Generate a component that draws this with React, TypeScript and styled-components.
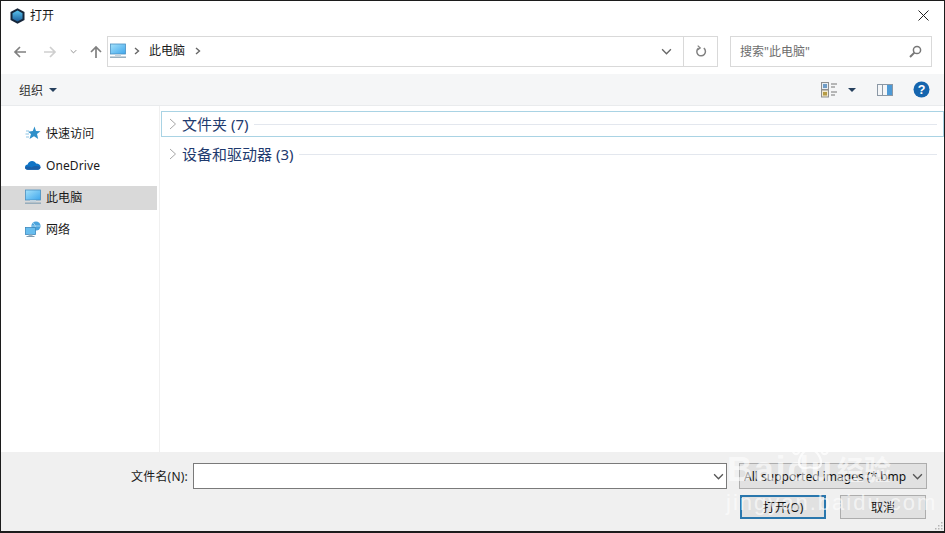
import React from "react";
import styled, { createGlobalStyle } from "styled-components";

const Global = createGlobalStyle`
  html, body { margin: 0; padding: 0; background: #fff; }
  * { box-sizing: border-box; }
`;

const Window = styled.div`
  position: relative;
  width: 945px;
  height: 533px;
  overflow: hidden;
  display: flex;
  flex-direction: column;
  background: #fff;
  border: 1px solid #1c1c1c;
  border-bottom-width: 2px;
  font-family: "Noto Sans", "Noto Sans CJK SC", sans-serif;
  font-size: 12px;
  color: #1a1a1a;
`;

const TitleBar = styled.div`
  height: 29px;
  flex: none;
  display: flex;
  align-items: center;
  padding: 0 15px 0 9px;
  gap: 5px;
`;
const TitleText = styled.span`
  flex: 1;
  font-size: 12px;
  line-height: 16px;
`;

const NavBar = styled.div`
  height: 31px;
  margin-top: 6px;
  flex: none;
  display: flex;
  align-items: center;
  padding-right: 12px;
`;
const NavButtons = styled.div`
  width: 106px;
  flex: none;
  display: flex;
  align-items: center;
  padding-left: 12px;
  gap: 0;
`;
const NavGap = styled.span<{ $w: number }>`
  width: ${(p) => p.$w}px;
  flex: none;
`;
const AddressBox = styled.div`
  width: 611px;
  height: 31px;
  flex: none;
  display: flex;
  align-items: center;
  border: 1px solid #d9d9d9;
`;
const Crumbs = styled.div`
  flex: 1;
  display: flex;
  align-items: center;
  padding: 0 0 1px 2px;
  color: #1a1a1a;
`;
const CrumbText = styled.span`
  margin: 0 10px 0 9px;
  font-size: 12px;
  line-height: 16px;
  padding-bottom: 1px;
`;
const AddressAction = styled.div<{ $w: number; $line?: boolean }>`
  width: ${(p) => p.$w}px;
  height: 100%;
  flex: none;
  display: flex;
  align-items: center;
  justify-content: center;
  border-left: ${(p) => (p.$line ? "1px solid #d9d9d9" : "none")};
`;
const SearchBox = styled.div`
  width: 202px;
  height: 31px;
  margin-left: 12px;
  flex: none;
  display: flex;
  align-items: center;
  justify-content: space-between;
  padding: 0 9px 1px;
  border: 1px solid #d9d9d9;
  color: #6d6d6d;
  font-size: 12px;
`;

const Toolbar = styled.div`
  height: 32px;
  margin-top: 7px;
  flex: none;
  display: flex;
  align-items: center;
  padding: 0 14px 0 18px;
  background: #f5f6f7;
  border-bottom: 1px solid #e9ebed;
`;
const ToolLabel = styled.span`
  font-size: 12px;
  color: #333;
  margin-right: 6px;
`;
const Spacer = styled.div`
  flex: 1;
`;
const ToolIcons = styled.div`
  display: flex;
  align-items: center;
`;

const Body = styled.div`
  flex: 1;
  min-height: 0;
  display: flex;
`;
const Sidebar = styled.nav`
  width: 159px;
  flex: none;
  padding-top: 16px;
  display: flex;
  flex-direction: column;
  gap: 8px;
  border-right: 1px solid #f0f0f0;
`;
const NavRow = styled.div<{ $active?: boolean }>`
  width: 156px;
  height: 24px;
  display: flex;
  align-items: center;
  padding: 0 0 2px 24px;
  gap: 5px;
  background: ${(p) => (p.$active ? "#d9d9d9" : "transparent")};
  font-size: 12px;
  color: #1a1a1a;
`;
const NavText = styled.span`
  letter-spacing: 0.1px;
`;
const IconSlot = styled.span`
  width: 16px;
  height: 16px;
  flex: none;
  display: inline-flex;
`;

const Content = styled.main`
  flex: 1;
  min-width: 0;
  padding: 5px 0 0 1px;
  display: flex;
  flex-direction: column;
  gap: 4px;
`;
const Group = styled.div<{ $focus?: boolean }>`
  height: 26px;
  display: flex;
  align-items: center;
  padding: 0 6px 0 7px;
  border: 1px solid ${(p) => (p.$focus ? "#a9d3e4" : "transparent")};
`;
const GroupTitle = styled.span`
  margin: 0 6px 0 5px;
  padding-bottom: 1px;
  font-size: 15px;
  line-height: 20px;
  color: #1e3a6e;
  white-space: nowrap;
`;
const GroupLine = styled.div`
  flex: 1;
  height: 1px;
  background: #e3e7ee;
`;

const Footer = styled.footer`
  height: 79px;
  flex: none;
  background: #f0f0f0;
  padding: 11px 17px 0 130px;
  display: flex;
  flex-direction: column;
`;
const FileRow = styled.div`
  display: flex;
  align-items: center;
  height: 26px;
`;
const FileLabel = styled.label`
  width: 62px;
  flex: none;
  font-size: 12px;
  letter-spacing: 0.2px;
  color: #1a1a1a;
`;
const FileInput = styled.div`
  width: 534px;
  height: 26px;
  flex: none;
  background: #fff;
  border: 1px solid #7a7a7a;
  display: flex;
  align-items: center;
  justify-content: flex-end;
  padding-right: 2px;
`;
const TypeSelect = styled.div`
  width: 188px;
  height: 26px;
  margin-left: 12px;
  flex: none;
  display: flex;
  align-items: center;
  justify-content: space-between;
  padding: 0 3px 0 4px;
  background: #e1e1e1;
  border: 1px solid #adadad;
  font-size: 12px;
  color: #111;
`;
const TypeText = styled.span`
  width: 164px;
  overflow: hidden;
  white-space: nowrap;
  font-size: 12px;
`;
const ButtonRow = styled.div`
  margin-top: 6px;
  padding-right: 1px;
  display: flex;
  justify-content: flex-end;
  gap: 14px;
`;
const DialogButton = styled.button<{ $primary?: boolean }>`
  width: 86px;
  height: 24px;
  margin: 0;
  padding: 0;
  background: #e1e1e1;
  border: ${(p) => (p.$primary ? "2px solid #2a77ad" : "1px solid #adadad")};
  font-family: inherit;
  font-size: 12px;
  color: #111;
`;

const Grip = styled.svg`
  position: absolute;
  right: 1px;
  bottom: 1px;
`;

const Watermark = styled.div`
  position: absolute;
  left: 725px;
  top: 430px;
  width: 200px;
  height: 100px;
  pointer-events: none;
  color: rgba(255, 255, 255, 0.62);
`;
const WmBaidu = styled.span`
  position: absolute;
  left: 1px;
  top: 18px;
  font-family: "Liberation Sans", sans-serif;
  font-weight: 700;
  font-size: 35px;
  line-height: 40px;
  letter-spacing: 2px;
`;
const WmJing = styled.span`
  position: absolute;
  left: 111px;
  top: 20px;
  font-family: "Noto Sans CJK SC", sans-serif;
  font-weight: 700;
  font-size: 27px;
  line-height: 36px;
`;
const WmUrl = styled.span`
  position: absolute;
  left: 0;
  top: 59px;
  font-family: "Liberation Sans", sans-serif;
  font-size: 22px;
  line-height: 26px;
  letter-spacing: 2px;
`;
const WmPaw = styled.svg`
  position: absolute;
  left: 58px;
  top: 2px;
`;

const Chevron = ({ color = "#555", w = 9 }: { color?: string; w?: number }) => (
  <svg width={w} height={w} viewBox="0 0 10 10">
    <path d="M1 3 L5 7 L9 3" fill="none" stroke={color} strokeWidth="1.2" />
  </svg>
);

const ArrowSvg = styled.svg<{ $flip?: boolean }>`
  transform: ${(p) => (p.$flip ? "scaleX(-1)" : "none")};
`;

const Arrow = ({ color, flip }: { color: string; flip?: boolean }) => (
  <ArrowSvg $flip={flip} width="14" height="14" viewBox="0 0 14 14">
    <path d="M13 7 H2 M7 2 L2 7 L7 12" fill="none" stroke={color} strokeWidth="1.7" />
  </ArrowSvg>
);

const Monitor = ({ id }: { id: string }) => (
  <svg width="16" height="16" viewBox="0 0 16 16">
    <defs>
      <linearGradient id={id} x1="0" y1="0" x2="1" y2="1">
        <stop offset="0" stopColor="#a5e2fb" />
        <stop offset="1" stopColor="#3ea6ec" />
      </linearGradient>
    </defs>
    <rect x="0.5" y="1" width="15" height="10" fill={`url(#${id})`} stroke="#4a8fc0" strokeWidth="0.8" />
    <rect x="5" y="11" width="6" height="2" fill="#c3d3de" />
    <rect x="0" y="13.5" width="16" height="1.4" fill="#8fa8b8" />
  </svg>
);

const Star = () => (
  <svg width="16" height="16" viewBox="0 0 16 16">
    <path d="M9.5 1.5 L11 6 L15.5 6.2 L12 9 L13.2 14 L9 11.2 L4.5 14 L6 9 L3 6.8 L7.8 6 Z" fill="#2e8fc9" />
    <path d="M1 6 H4 M0.5 9 H4 M1 12 H4" stroke="#8cc4e4" strokeWidth="1" />
  </svg>
);

const Cloud = () => (
  <svg width="17" height="16" viewBox="0 0 17 16">
    <path d="M3 13 C0.8 13 0 11.5 0 10.3 C0 8.6 1.4 7.6 2.8 7.6 C3.4 5.2 5.4 3.8 7.5 3.8 C9.6 3.8 11 5 11.7 6.5 C14.4 6.4 16.5 8 16.5 10.2 C16.5 12 15.2 13 13.6 13 Z" fill="#0f74c6" />
    <path d="M3 13 C1.2 13 0 12 0 10.4 C3 9 5 9.5 7 10.6 C9.5 9 13 8.6 16.5 10.2 C16.5 12 15.2 13 13.6 13 Z" fill="#1a5fa8" />
  </svg>
);

const Network = () => (
  <svg width="16" height="17" viewBox="0 0 16 17">
    <circle cx="11" cy="5" r="4.6" fill="#4aa3dc" />
    <path d="M8 2 C10 3 11 6 10 8.5 M7 5 H15" stroke="#b7e0f5" strokeWidth="0.8" fill="none" />
    <rect x="0.5" y="6.5" width="10" height="7" fill="#68bdee" stroke="#3c88bc" strokeWidth="0.8" />
    <rect x="3.5" y="13.5" width="4" height="1.5" fill="#9bb4c4" />
    <rect x="1.5" y="15" width="8" height="1" fill="#7f9bb0" />
  </svg>
);

const AppIcon = () => (
  <svg width="15" height="16" viewBox="0 0 15 16">
    <defs>
      <linearGradient id="cube" x1="0" y1="0" x2="0" y2="1">
        <stop offset="0" stopColor="#59c3ee" />
        <stop offset="1" stopColor="#1c5f9c" />
      </linearGradient>
    </defs>
    <path d="M7.5 0.3 L14.5 4 V12 L7.5 15.7 L0.5 12 V4 Z" fill="#16263a" />
    <path d="M7.5 2.6 L12.5 5.2 V10.8 L7.5 13.4 L2.5 10.8 V5.2 Z" fill="url(#cube)" />
  </svg>
);

const ViewIcon = () => (
  <svg width="17" height="16" viewBox="0 0 17 16">
    <rect x="0.5" y="0.5" width="7" height="7" fill="#e8eef4" stroke="#8f8f8f" />
    <rect x="2" y="2" width="4" height="4" fill="#6f9cc6" />
    <rect x="0.5" y="8" width="7" height="7" fill="#f2ead0" stroke="#8f8f8f" />
    <rect x="2" y="10" width="4" height="3.5" fill="#b59b45" />
    <path d="M10 2 H16 M10 5 H14 M10 10 H16 M10 13 H14" stroke="#777" strokeWidth="1" />
  </svg>
);

const PaneIcon = () => (
  <svg width="16" height="12" viewBox="0 0 16 12">
    <rect x="0.5" y="0.5" width="15" height="11" fill="#f4f6f8" stroke="#8b98a5" />
    <rect x="5" y="1" width="1" height="10" fill="#8b98a5" />
    <rect x="10" y="1" width="5" height="10" fill="#4d9ad6" />
  </svg>
);

const Help = () => (
  <svg width="17" height="17" viewBox="0 0 17 17">
    <circle cx="8.5" cy="8.5" r="8" fill="#1565ae" />
    <text x="8.5" y="13" textAnchor="middle" fontFamily="Liberation Sans" fontWeight="700" fontSize="12.5" fill="#fff">?</text>
  </svg>
);

const Caret = () => (
  <svg width="8" height="4" viewBox="0 0 8 4">
    <path d="M0 0 H8 L4 4 Z" fill="#26405e" />
  </svg>
);

const GroupChevron = () => (
  <svg width="8" height="12" viewBox="0 0 8 12">
    <path d="M1 1 L6.5 6 L1 11" fill="none" stroke="#a6a6a6" strokeWidth="1" />
  </svg>
);

const SmallCrumb = () => (
  <svg width="6" height="8" viewBox="0 0 6 8">
    <path d="M1 1 L4.5 4 L1 7" fill="none" stroke="#666" strokeWidth="1.4" />
  </svg>
);

export default function App() {
  return (
    <Window>
      <Global />
      <TitleBar>
        <AppIcon />
        <TitleText>打开</TitleText>
        <svg width="11" height="11" viewBox="0 0 11 11">
          <path d="M0.5 0.5 L10.5 10.5 M10.5 0.5 L0.5 10.5" stroke="#222" strokeWidth="1" />
        </svg>
      </TitleBar>

      <NavBar>
        <NavButtons>
          <Arrow color="#808080" />
          <NavGap $w={16} />
          <Arrow color="#cfcfcf" flip />
          <NavGap $w={13} />
          <Chevron color="#808080" w={7} />
          <NavGap $w={12} />
          <svg width="14" height="14" viewBox="0 0 14 14">
            <path d="M7 13 V2 M2 7 L7 2 L12 7" fill="none" stroke="#808080" strokeWidth="1.7" />
          </svg>
        </NavButtons>
        <AddressBox>
          <Crumbs>
            <Monitor id="mon-a" />
            <NavGap $w={8} />
            <SmallCrumb />
            <CrumbText>此电脑</CrumbText>
            <SmallCrumb />
          </Crumbs>
          <AddressAction $w={34}>
            <Chevron color="#666" w={11} />
          </AddressAction>
          <AddressAction $w={34} $line>
            <svg width="12" height="13" viewBox="0 0 12 13">
              <path d="M8.8 3.2 A4.3 4.3 0 1 1 3.6 3.1" fill="none" stroke="#808080" strokeWidth="1.5" />
              <path d="M3.2 0.6 L5.8 3 L3 5" fill="none" stroke="#808080" strokeWidth="1.2" transform="translate(-0.5 0)" />
            </svg>
          </AddressAction>
        </AddressBox>
        <SearchBox>
          <span>搜索"此电脑"</span>
          <svg width="13" height="13" viewBox="0 0 13 13">
            <circle cx="8" cy="5" r="3.6" fill="none" stroke="#777" strokeWidth="1.5" />
            <path d="M5.4 7.6 L1 12" stroke="#777" strokeWidth="2" />
          </svg>
        </SearchBox>
      </NavBar>

      <Toolbar>
        <ToolLabel>组织</ToolLabel>
        <Caret />
        <Spacer />
        <ToolIcons>
          <ViewIcon />
          <NavGap $w={10} />
          <Caret />
          <NavGap $w={21} />
          <PaneIcon />
          <NavGap $w={20} />
          <Help />
        </ToolIcons>
      </Toolbar>

      <Body>
        <Sidebar>
          <NavRow>
            <IconSlot><Star /></IconSlot>
            <NavText>快速访问</NavText>
          </NavRow>
          <NavRow>
            <IconSlot><Cloud /></IconSlot>
            <NavText>OneDrive</NavText>
          </NavRow>
          <NavRow $active>
            <IconSlot><Monitor id="mon-b" /></IconSlot>
            <NavText>此电脑</NavText>
          </NavRow>
          <NavRow>
            <IconSlot><Network /></IconSlot>
            <NavText>网络</NavText>
          </NavRow>
        </Sidebar>
        <Content>
          <Group $focus>
            <GroupChevron />
            <GroupTitle>文件夹 (7)</GroupTitle>
            <GroupLine />
          </Group>
          <Group>
            <GroupChevron />
            <GroupTitle>设备和驱动器 (3)</GroupTitle>
            <GroupLine />
          </Group>
        </Content>
      </Body>

      <Footer>
        <FileRow>
          <FileLabel>文件名(N):</FileLabel>
          <FileInput>
            <Chevron color="#555" w={11} />
          </FileInput>
          <TypeSelect>
            <TypeText>All supported images (*.bmp</TypeText>
            <Chevron color="#555" w={11} />
          </TypeSelect>
        </FileRow>
        <ButtonRow>
          <DialogButton $primary>打开(O)</DialogButton>
          <DialogButton>取消</DialogButton>
        </ButtonRow>
      </Footer>

      <Grip width="9" height="9" viewBox="0 0 9 9">
        <path d="M7 1 h1.5 v1.5 h-1.5z M4 4 h1.5 v1.5 h-1.5z M7 4 h1.5 v1.5 h-1.5z M1 7 h1.5 v1.5 h-1.5z M4 7 h1.5 v1.5 h-1.5z M7 7 h1.5 v1.5 h-1.5z" fill="#b5b5b5" />
      </Grip>

      <Watermark>
        <WmPaw width="52" height="38" viewBox="0 0 52 52" fill="none" stroke="rgba(255,255,255,0.75)" strokeWidth="3">
          <ellipse cx="7" cy="22" rx="5" ry="7" />
          <ellipse cx="19" cy="8" rx="5.5" ry="7" />
          <ellipse cx="34" cy="8" rx="5.5" ry="7" />
          <ellipse cx="46" cy="22" rx="5" ry="7" />
          <path d="M26 22 C18 22 10 34 11 42 C12 50 20 48 26 47 C32 48 40 50 41 42 C42 34 34 22 26 22 Z" />
        </WmPaw>
        <WmBaidu>Baidu</WmBaidu>
        <WmJing>经验</WmJing>
        <WmUrl>jingyan.baidu.com</WmUrl>
      </Watermark>
    </Window>
  );
}
